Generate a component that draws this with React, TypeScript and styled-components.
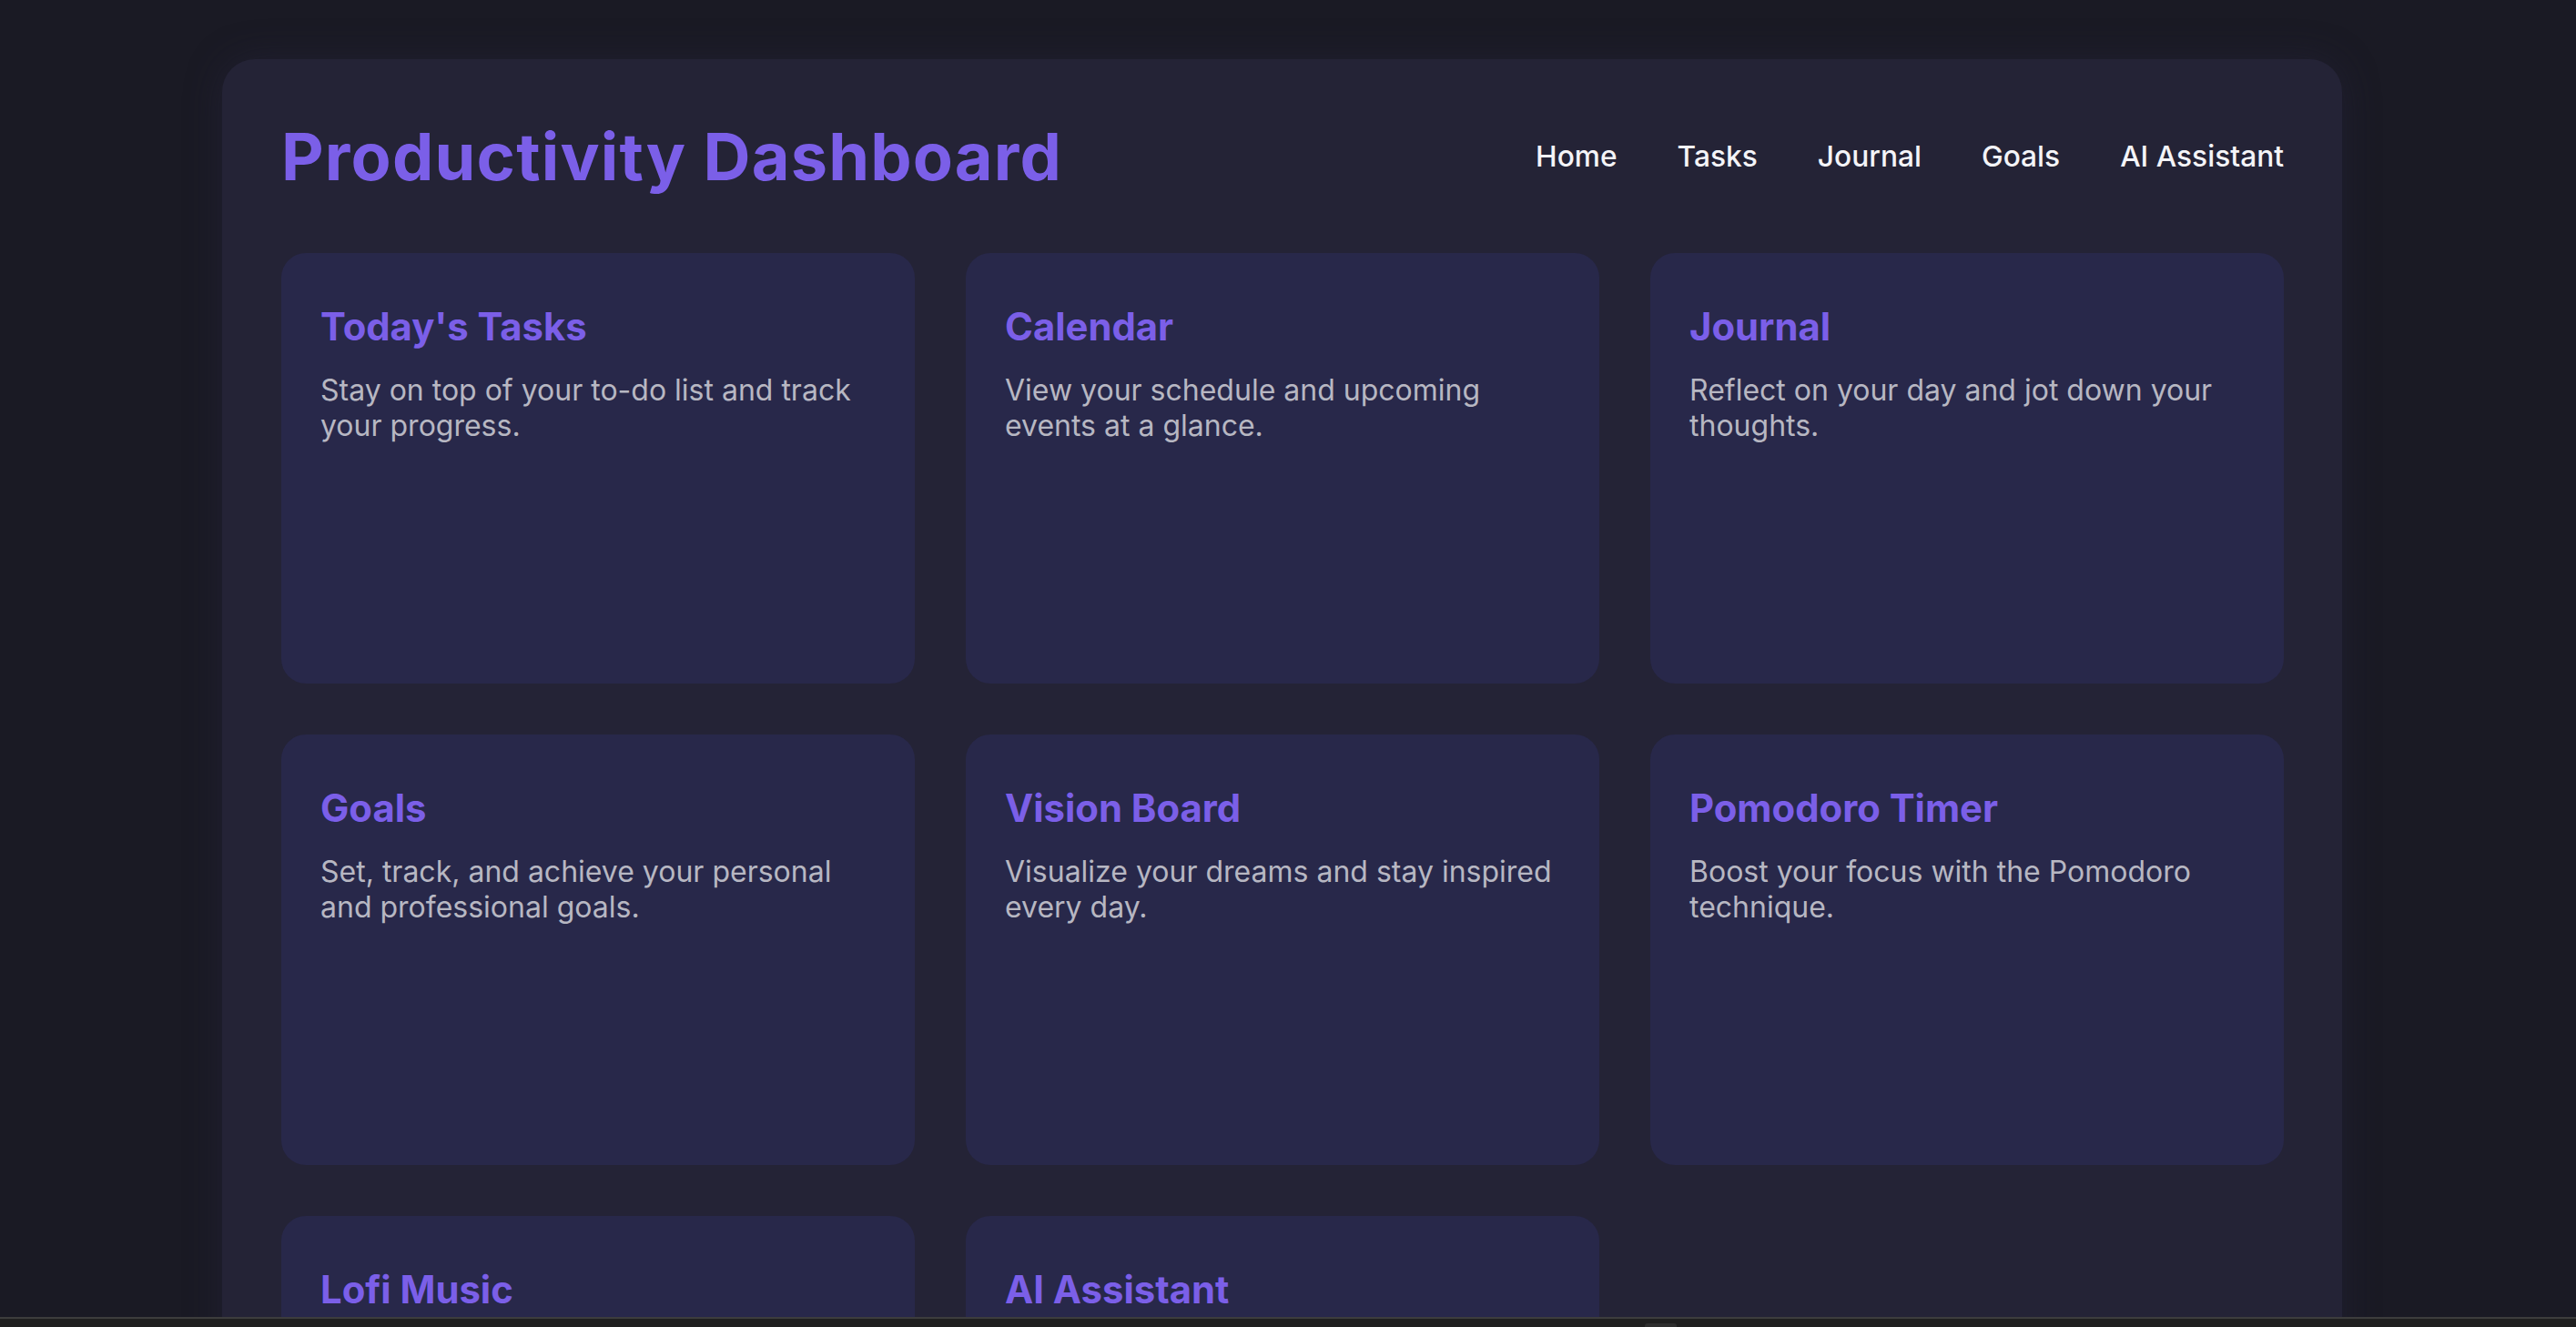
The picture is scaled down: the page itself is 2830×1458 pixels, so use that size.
import React from "react";
import styled, { createGlobalStyle } from "styled-components";

const GlobalStyle = createGlobalStyle`
  html, body {
    margin: 0;
    padding: 0;
    background: #1a1a24;
    overflow: hidden;
  }
  body {
    font-family: Inter, "Noto Sans", "Liberation Sans", sans-serif;
    -webkit-font-smoothing: antialiased;
  }
  * { box-sizing: border-box; }
`;

const Page = styled.div`
  min-height: 1458px;
  padding: 65px 0 0 244px;
`;

const Shell = styled.main`
  width: 2329px;
  min-height: 1600px;
  background: #242336;
  border-radius: 36px;
  padding: 63px 64px 64px 65px;
  box-shadow: 0 0 40px rgba(40, 38, 64, 0.45);
`;

const Header = styled.header`
  display: flex;
  align-items: center;
  justify-content: space-between;
  margin-bottom: 63px;
`;

const Title = styled.h1`
  margin: 0;
  font-size: 72px;
  font-weight: 700;
  line-height: 87px;
  color: #7b5fe8;
  letter-spacing: 1.2px;
`;

const Nav = styled.nav`
  display: flex;
  align-items: center;
  gap: 66px;
`;

const NavLink = styled.a`
  font-size: 31.7px;
  font-weight: 500;
  color: #f4f4f8;
  text-decoration: none;
  line-height: 39px;
  cursor: pointer;
`;

const Grid = styled.section`
  display: grid;
  grid-template-columns: repeat(3, 696px);
  column-gap: 56px;
  row-gap: 56px;
`;

const Card = styled.article`
  height: 473px;
  background: #28284a;
  border-radius: 27px;
  padding: 55px 43px 43px 43px;
`;

const CardTitle = styled.h3`
  margin: 0 0 24px 0;
  font-size: 41.8px;
  font-weight: 700;
  line-height: 52px;
  color: #7b5fe8;
`;

const CardText = styled.p`
  margin: 0;
  font-size: 32px;
  font-weight: 400;
  line-height: 39px;
  color: #b7b7c2;
`;

const BottomBar = styled.div`
  position: fixed;
  left: 0;
  right: 0;
  bottom: 0;
  height: 11px;
  background: #1f1f1f;
  border-top: 2px solid #3d3d3d;
`;

const BarTab = styled.span`
  position: absolute;
  left: 1807px;
  top: 5px;
  width: 35px;
  height: 6px;
  border-radius: 3px 3px 0 0;
  background: #2e2e2e;
`;

const cards = [
  { title: "Today's Tasks", text: "Stay on top of your to-do list and track your progress." },
  { title: "Calendar", text: "View your schedule and upcoming events at a glance." },
  { title: "Journal", text: "Reflect on your day and jot down your thoughts." },
  { title: "Goals", text: "Set, track, and achieve your personal and professional goals." },
  { title: "Vision Board", text: "Visualize your dreams and stay inspired every day." },
  { title: "Pomodoro Timer", text: "Boost your focus with the Pomodoro technique." },
  { title: "Lofi Music", text: "Relax and focus with calming lofi beats." },
  { title: "AI Assistant", text: "Get smart suggestions and help from your AI companion." },
];

const links = ["Home", "Tasks", "Journal", "Goals", "AI Assistant"];

export default function App() {
  return (
    <>
      <GlobalStyle />
      <Page>
        <Shell>
          <Header>
            <Title>Productivity Dashboard</Title>
            <Nav>
              {links.map((l) => (
                <NavLink key={l}>{l}</NavLink>
              ))}
            </Nav>
          </Header>
          <Grid>
            {cards.map((c) => (
              <Card key={c.title}>
                <CardTitle>{c.title}</CardTitle>
                <CardText>{c.text}</CardText>
              </Card>
            ))}
          </Grid>
        </Shell>
      </Page>
      <BottomBar>
        <BarTab />
      </BottomBar>
    </>
  );
}
